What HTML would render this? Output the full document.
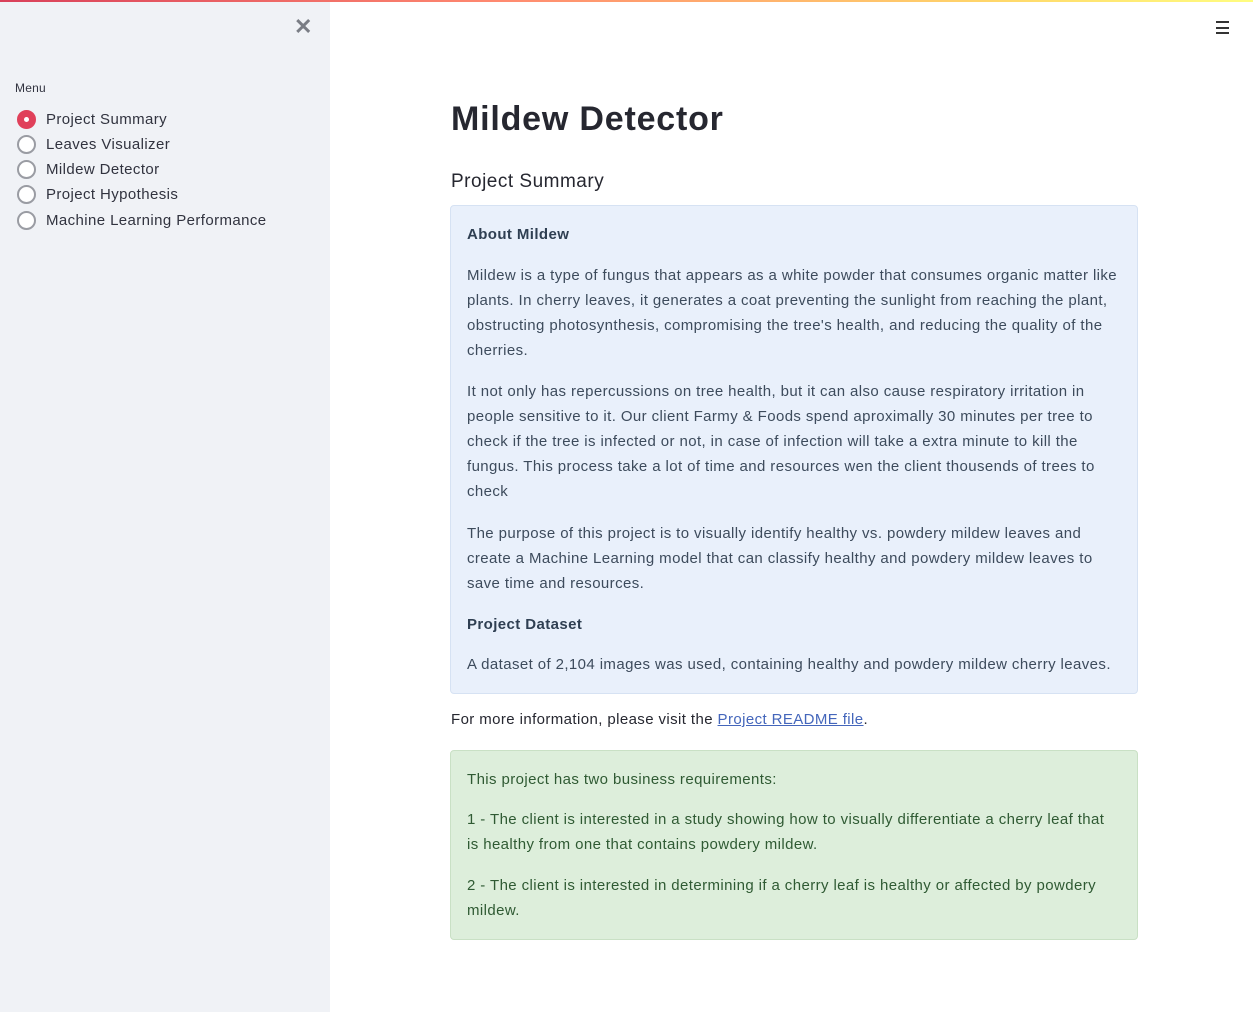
<!DOCTYPE html>
<html><head><meta charset="utf-8"><style>
*{margin:0;padding:0;box-sizing:border-box}
body{width:1253px;height:1012px;overflow:hidden;background:#fff;font-family:"Liberation Sans",sans-serif;color:#262730;position:relative}
.top{position:absolute;left:0;top:0;width:1253px;height:2px;background:linear-gradient(90deg,#d9405a,#ff8a70 40%,#ffd86a 80%,#fffd80);z-index:5}
.side{position:absolute;left:0;top:0;width:330px;height:1012px;background:#f0f2f6}
.x{position:absolute;left:294px;top:14px;font-size:22px;color:#7a7d85;font-weight:bold}
.menu{position:absolute;left:15px;top:81px;font-size:12px;color:#31333f;letter-spacing:0.2px}
.r{position:absolute;left:17px;height:20px;font-size:15px;color:#31333f;display:flex;align-items:center;letter-spacing:0.4px}
.r i{display:inline-block;width:19px;height:19px;border:2px solid #9a9ca3;border-radius:50%;margin-right:10px;background:#fff}
.r i.on{background:#e0405a;border-color:#e0405a;position:relative}
.r i.on:after{content:"";position:absolute;left:5px;top:5px;width:5px;height:5px;border-radius:50%;background:#fff}
.ham{position:absolute;left:1216px;top:21px;width:13px}
.ham b{display:block;height:2px;background:#333;margin-bottom:3.5px}
h1{position:absolute;left:451px;top:100px;font-size:34px;font-weight:bold;color:#262730;letter-spacing:0.8px}
h3{position:absolute;left:451px;top:171px;font-size:19px;font-weight:normal;color:#262730;letter-spacing:0.5px}
.box{position:absolute;left:450px;width:688px;border-radius:4px;padding:0 16px;white-space:nowrap;font-size:15px;letter-spacing:0.4px}
.blue{top:205px;height:489px;background:#e9f0fb;border:1px solid #d6e2f3;color:#3d4b5c}
.green{top:750px;height:190px;background:#ddeedb;border:1px solid #c9e0c5;color:#2f5a33}
.box p{position:absolute;left:16px;line-height:25px}
.box b{color:#2f3f52}
.info{position:absolute;left:451px;top:711px;font-size:15px;color:#262730;letter-spacing:0.4px}
.info a{color:#4466bb;text-decoration:underline}
</style></head><body>
<div class="side">
<div class="x">✕</div>
<div class="menu">Menu</div>
<div class="r" style="top:109px"><i class="on"></i>Project Summary</div>
<div class="r" style="top:134px"><i></i>Leaves Visualizer</div>
<div class="r" style="top:159px"><i></i>Mildew Detector</div>
<div class="r" style="top:184px"><i></i>Project Hypothesis</div>
<div class="r" style="top:210px"><i></i>Machine Learning Performance</div>
</div>
<div class="top"></div>
<div class="ham"><b></b><b></b><b></b></div>
<h1>Mildew Detector</h1>
<h3>Project Summary</h3>
<div class="box blue">
<p style="top:16px"><b>About Mildew</b></p>
<p style="top:57px">Mildew is a type of fungus that appears as a white powder that consumes organic matter like<br>plants. In cherry leaves, it generates a coat preventing the sunlight from reaching the plant,<br>obstructing photosynthesis, compromising the tree's health, and reducing the quality of the<br>cherries.</p>
<p style="top:173px">It not only has repercussions on tree health, but it can also cause respiratory irritation in<br>people sensitive to it. Our client Farmy &amp; Foods spend aproximally 30 minutes per tree to<br>check if the tree is infected or not, in case of infection will take a extra minute to kill the<br>fungus. This process take a lot of time and resources wen the client thousends of trees to<br>check</p>
<p style="top:315px">The purpose of this project is to visually identify healthy vs. powdery mildew leaves and<br>create a Machine Learning model that can classify healthy and powdery mildew leaves to<br>save time and resources.</p>
<p style="top:406px"><b>Project Dataset</b></p>
<p style="top:446px">A dataset of 2,104 images was used, containing healthy and powdery mildew cherry leaves.</p>
</div>
<div class="info">For more information, please visit the <a>Project README file</a>.</div>
<div class="box green">
<p style="top:16px">This project has two business requirements:</p>
<p style="top:56px">1 - The client is interested in a study showing how to visually differentiate a cherry leaf that<br>is healthy from one that contains powdery mildew.</p>
<p style="top:122px">2 - The client is interested in determining if a cherry leaf is healthy or affected by powdery<br>mildew.</p>
</div>
</body></html>
